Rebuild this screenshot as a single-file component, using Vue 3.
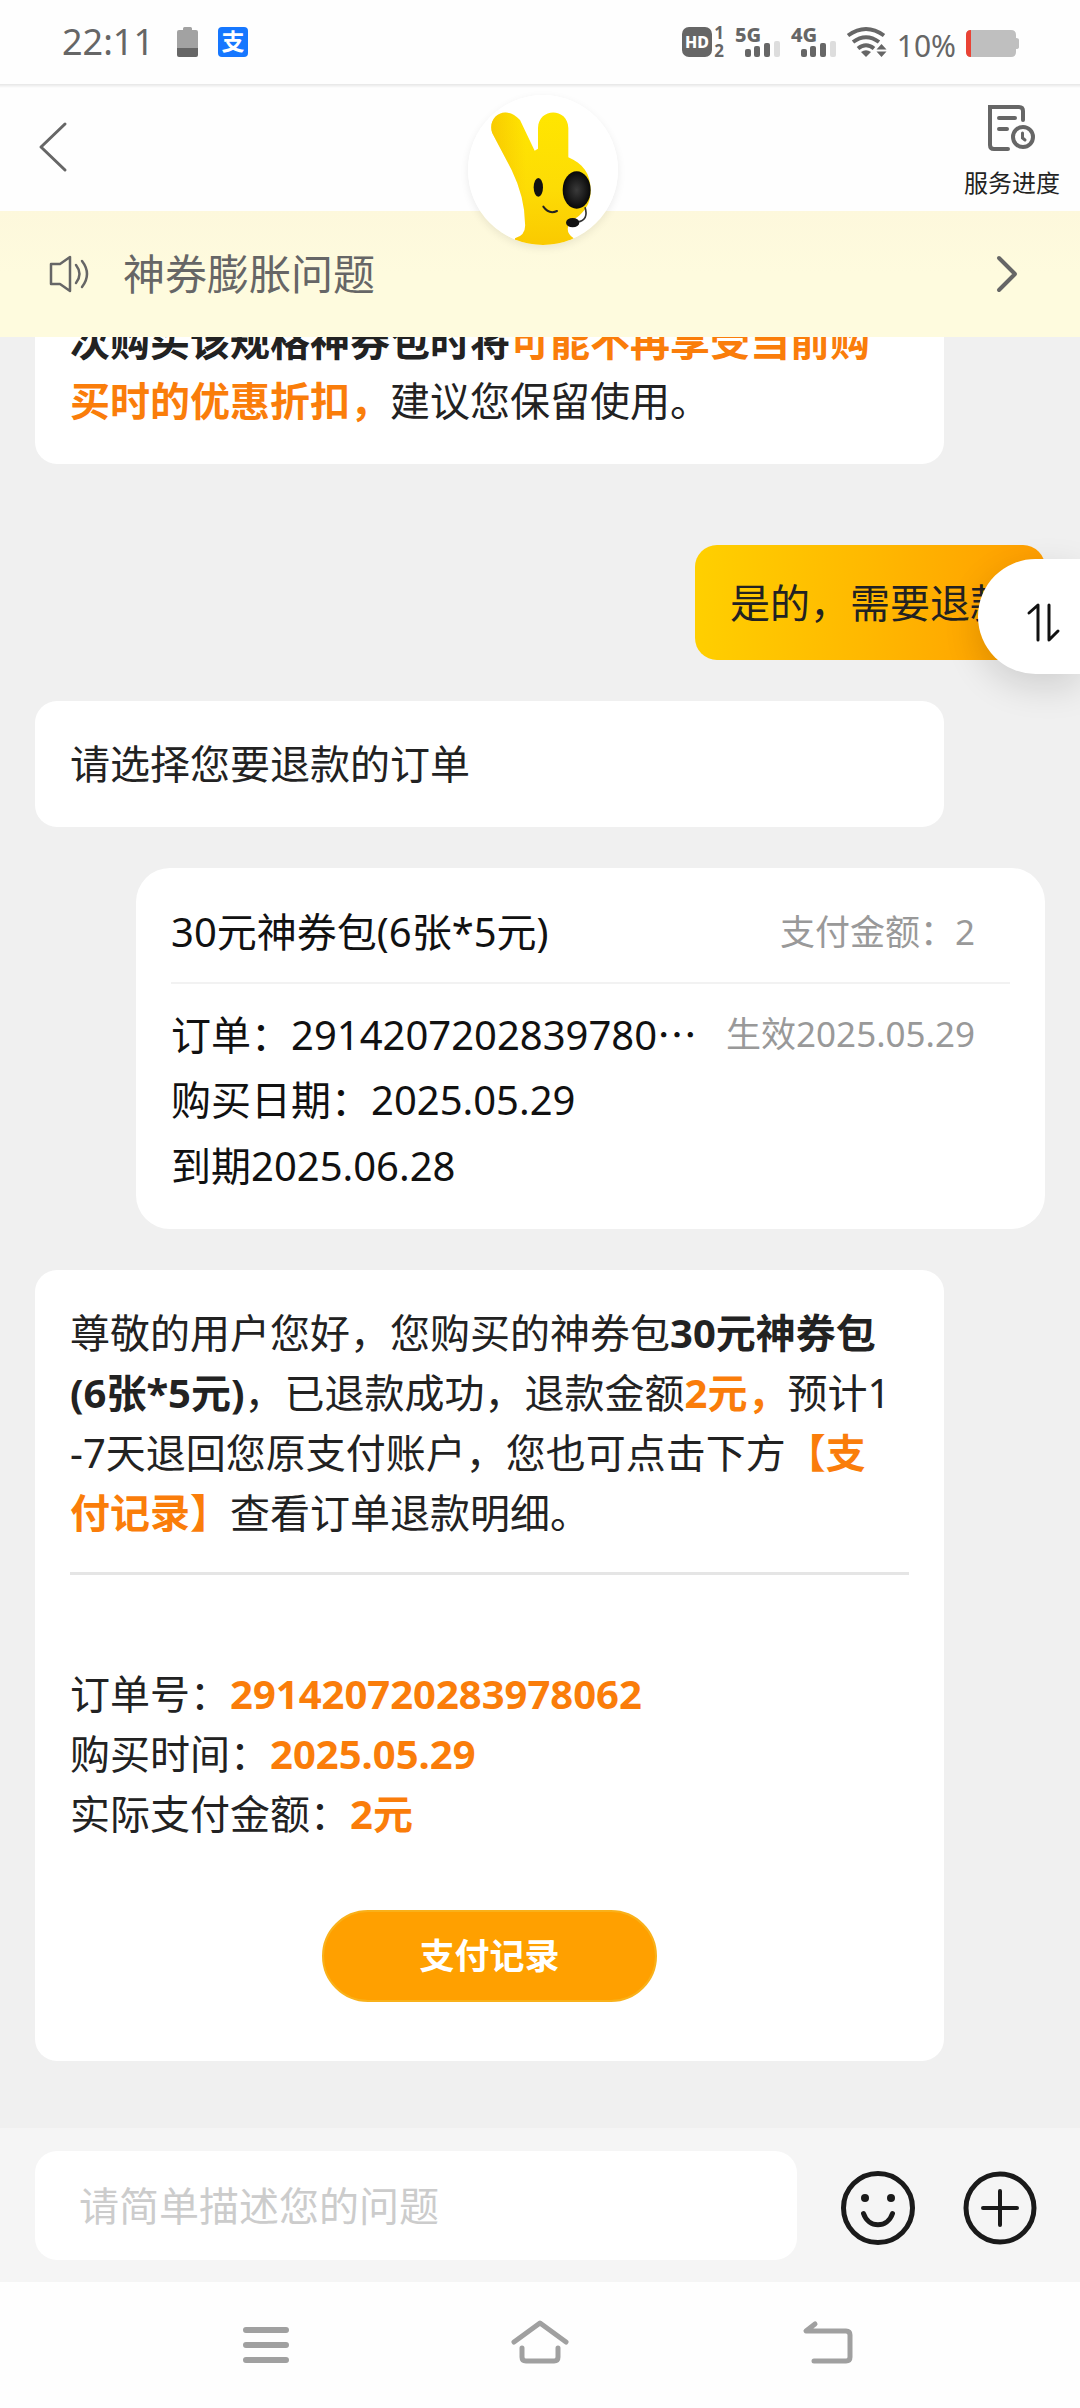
<script setup>
import { ref } from 'vue'

const draft = ref('')

const orderDetails = [
  { label: '订单号：', value: '291420720283978062' },
  { label: '购买时间：', value: '2025.05.29' },
  { label: '实际支付金额：', value: '2元' },
]

const networks = ['5G', '4G']
</script>

<template>
  <div class="page" lang="zh-CN">
    <div class="status">
      <div class="status-side">
        <span class="time">22:11</span>
        <svg class="low-battery" width="21" height="30" viewBox="0 0 21 30" aria-hidden="true">
          <path d="M6 3V1.500Q6 0 7.500 0h6Q15 0 15 1.500V3h4q2 0 2 2v16H0V5q0-2 2-2z" fill="#a2a2a2" />
          <path d="M0 21h21v7q0 2-2 2H2q-2 0-2-2z" fill="#666" />
        </svg>
        <span class="alipay">支</span>
      </div>
      <div class="status-side right">
        <svg width="43" height="30" viewBox="0 0 43 30" aria-hidden="true">
          <rect width="30" height="30" rx="7" fill="#666" />
          <text x="15" y="21" text-anchor="middle" font-size="16" font-weight="800" fill="#fff">HD</text>
          <text x="37" y="12" text-anchor="middle" font-size="17" font-weight="700" fill="#666">1</text>
          <text x="37" y="30" text-anchor="middle" font-size="17" font-weight="700" fill="#666">2</text>
        </svg>
        <svg v-for="name in networks" :key="name" width="46" height="30" viewBox="0 0 46 30" aria-hidden="true">
          <text x="0" y="15" font-size="20" font-weight="800" fill="#666">{{ name }}</text>
          <g fill="#666">
            <rect x="10" y="22" width="6" height="8" rx="2" />
            <rect x="19" y="19" width="6" height="11" rx="2" />
            <rect x="29" y="16" width="6" height="14" rx="2" />
          </g>
          <rect x="39" y="14" width="6" height="16" rx="2" fill="#ddd" />
        </svg>
        <svg width="40" height="30" viewBox="0 0 40 30" aria-hidden="true">
          <g fill="none" stroke="#666" stroke-width="4">
            <path d="M1 8.500Q19 -4.500 37 8.500" />
            <path d="M6 15Q19 5.500 32 15" />
            <path d="M11 21.500Q19 15 27 21.500" />
          </g>
          <path d="M19 30l-5-5q5-3.500 10 0z" fill="#666" />
          <path d="M34.500 17l5 5.500h-10zM34.500 30l5-5.500h-10z" fill="#666" />
        </svg>
        <span class="percent">10%</span>
        <svg width="54" height="27" viewBox="0 0 54 27" aria-hidden="true">
          <path d="M6 0h39q5 0 5 5v3q3 0 3 2v7q0 2-3 2v3q0 5-5 5H6q-6 0-6-5V5q0-5 6-5z" fill="#bfbfbf" />
          <path d="M5 0v27Q0 27 0 22V5Q0 0 5 0z" fill="#ea4335" />
        </svg>
      </div>
    </div>

    <header class="header">
      <button class="icon-button back" aria-label="返回">
        <svg width="28" height="50" viewBox="0 0 28 50"><path d="M26 2L2 25l24 23" fill="none" stroke="#666" stroke-width="3" stroke-linecap="round" stroke-linejoin="round" /></svg>
      </button>
      <div class="avatar">
        <svg width="150" height="150" viewBox="87 15 450 450" role="img" aria-label="客服">
          <defs>
            <linearGradient id="skin" x1="0" y1="0" x2="0" y2="1">
              <stop offset="0" stop-color="#ffe600" />
              <stop offset="0.550" stop-color="#fddc05" />
              <stop offset="1" stop-color="#fac800" />
            </linearGradient>
            <linearGradient id="shade" x1="0" y1="0" x2="1" y2="0">
              <stop offset="0" stop-color="#f2b200" stop-opacity="0.500" />
              <stop offset="0.350" stop-color="#f2b200" stop-opacity="0" />
            </linearGradient>
            <radialGradient id="muff"><stop offset="0" stop-color="#3a3a3a" /><stop offset="1" stop-color="#080808" /></radialGradient>
            <clipPath id="face"><circle cx="312" cy="240" r="225" /></clipPath>
            <path id="body" d="M160 130C142 82 198 40 243 90L287 182L297 176V114C299 52 386 52 388 114V202C430 220 455 250 455 300C455 355 425 375 392 398Q376 425 404 445L400 480H225L228 445Q262 435 258 400Q257 320 218 240Z" />
          </defs>
          <circle cx="312" cy="240" r="225" fill="#fff" />
          <g clip-path="url(#face)">
            <use href="#body" fill="url(#skin)" />
            <use href="#body" fill="url(#shade)" />
          </g>
          <ellipse cx="298" cy="292" rx="14" ry="28" fill="#111" />
          <ellipse cx="413" cy="300" rx="42" ry="56" fill="url(#muff)" />
          <path d="M313 350Q330 374 354 363" fill="none" stroke="#222" stroke-width="6" stroke-linecap="round" />
          <path d="M438 352Q450 390 416 396" fill="none" stroke="#333" stroke-width="5" />
          <ellipse cx="401" cy="398" rx="20" ry="14" fill="#111" />
        </svg>
      </div>
      <button class="progress">
        <svg width="48" height="46" viewBox="0 0 48 46" fill="none" stroke="#666" stroke-width="4" stroke-linecap="round">
          <path d="M35 15V6q0-4-4-4H2v38q0 4 4 4h14" />
          <path d="M11 13h16M11 24h8" />
          <circle cx="35" cy="32" r="10" />
          <path d="M34.500 28v5l2.500 2" stroke-width="3" />
        </svg>
        <span>服务进度</span>
      </button>
    </header>

    <a class="notice" href="#">
      <svg width="40" height="38" viewBox="0 0 40 38" fill="none" stroke="#666" stroke-width="2.500" stroke-linejoin="round" stroke-linecap="round">
        <path d="M2 9h9L21 2v34l-10-7H2z" />
        <path d="M27 10q7 9 0 18M33 6q10 13 0 26" />
      </svg>
      <span>神券膨胀问题</span>
      <svg width="22" height="38" viewBox="0 0 22 38" fill="none" stroke="#666" stroke-width="4" stroke-linecap="round" stroke-linejoin="round"><path d="M3 3l16 16L3 35" /></svg>
    </a>

    <main class="chat">
      <section class="message">
        <p><b>次购买该规格神券包时将</b><b class="accent">可能不再享受当前购<br>买时的优惠折扣，</b>建议您保留使用。</p>
      </section>

      <p class="reply">是的，需要退款</p>

      <section class="message">
        <p>请选择您要退款的订单</p>
      </section>

      <section class="order">
        <div class="order-head">
          <span>30元神券包(6张*5元)</span>
          <span class="muted">支付金额：2</span>
        </div>
        <div class="order-row">
          <span>订单：2914207202839780<span class="dots">…</span></span>
          <span class="muted">生效2025.05.29</span>
        </div>
        <div class="order-row">购买日期：2025.05.29</div>
        <div class="order-row">到期2025.06.28</div>
      </section>

      <section class="message">
        <p>尊敬的用户您好，您购买的神券包<b>30元神券包<br>(6张*5元)</b>，已退款成功，退款金额<b class="accent">2元，</b>预计1<br>-7天退回您原支付账户，您也可点击下方<b class="accent">【支<br>付记录】</b>查看订单退款明细。</p>
        <hr>
        <p v-for="item in orderDetails" :key="item.label">{{ item.label }}<b class="accent">{{ item.value }}</b></p>
        <button class="record">支付记录</button>
      </section>
    </main>

    <button class="switcher" aria-label="切换">
      <svg width="34" height="40" viewBox="0 0 34 40" fill="none" stroke="#111" stroke-width="3" stroke-linecap="round" stroke-linejoin="round">
        <path d="M3 11l9-8v35M23 3v35l9-9" />
      </svg>
    </button>

    <form class="composer" @submit.prevent>
      <input v-model="draft" type="text" placeholder="请简单描述您的问题" aria-label="请简单描述您的问题">
      <button type="button" class="icon-button" aria-label="表情">
        <svg width="74" height="74" viewBox="0 0 74 74" fill="none" stroke="#1a1a1a" stroke-width="5" stroke-linecap="round">
          <circle cx="37" cy="37" r="34.500" />
          <path d="M22.500 42.500c5 15 24 15 29 0" />
          <circle cx="24" cy="27" r="4" fill="#1a1a1a" stroke="none" />
          <circle cx="50" cy="27" r="4" fill="#1a1a1a" stroke="none" />
        </svg>
      </button>
      <button type="button" class="icon-button" aria-label="更多">
        <svg width="74" height="74" viewBox="0 0 74 74" fill="none" stroke="#1a1a1a" stroke-width="5" stroke-linecap="round">
          <circle cx="37" cy="37" r="34" />
          <path d="M20 37h34M37 20v34" stroke-width="4" />
        </svg>
      </button>
    </form>

    <nav class="system-nav">
      <button aria-label="最近任务">
        <svg width="60" height="48" viewBox="0 0 60 48" stroke="#a0a0a0" stroke-width="6" stroke-linecap="round"><path d="M10 9h40M10 24h40M10 39h40" /></svg>
      </button>
      <button aria-label="主屏幕">
        <svg width="60" height="48" viewBox="0 0 60 48" fill="none" stroke="#a0a0a0" stroke-width="5" stroke-linecap="round" stroke-linejoin="round">
          <path d="M4 21L30 2l26 19" />
          <path d="M12 27v9q0 4 4 4h28q4 0 4-4v-9" />
        </svg>
      </button>
      <button aria-label="返回上一级">
        <svg width="90" height="48" viewBox="-30 0 90 48" fill="none" stroke="#a0a0a0" stroke-width="5" stroke-linecap="round" stroke-linejoin="round">
          <path d="M16 3l-9 7h40q4 0 4 4v22q0 4-4 4H15" />
        </svg>
      </button>
    </nav>
  </div>
</template>

<style>
body {
  margin: 0;
}
</style>

<style scoped>
.page {
  position: relative;
  display: flex;
  flex-direction: column;
  height: 100vh;
  overflow: hidden;
  background: #f0f0f0;
  color: #222;
  font-family: "Noto Sans", "Noto Sans CJK SC", sans-serif;
  font-size: 40px;
  line-height: 60px;
}

p {
  margin: 0;
}

svg {
  display: block;
  flex: none;
  overflow: visible;
}

button,
input {
  margin: 0;
  padding: 0;
  border: 0;
  background: none;
  color: inherit;
  font: inherit;
}

.icon-button {
  flex: none;
}

.status {
  display: flex;
  justify-content: space-between;
  height: 57px;
  padding: 0 60px 27px 62px;
  background: #fefefe;
  color: #666;
}

.status-side {
  display: flex;
  align-items: flex-end;
}

.status-side.right {
  gap: 10px;
}

.time {
  margin-right: 23px;
  font-size: 36px;
  line-height: 36px;
  height: 33px;
}

.alipay {
  width: 30px;
  height: 30px;
  margin-left: 20px;
  border-radius: 4px;
  background: #1677ff;
  color: #fff;
  font-size: 23px;
  font-weight: 700;
  line-height: 29px;
  text-align: center;
}

.percent {
  font-size: 30px;
  line-height: 30px;
  height: 26px;
}

.header {
  z-index: 2;
  display: grid;
  grid-template-columns: 1fr 150px 1fr;
  align-items: start;
  justify-items: start;
  height: 127px;
  padding: 0 20px 0 39px;
  background: linear-gradient(#e6e6e6, #fefefe 4px);
}

.back {
  margin-top: 38px;
}

.avatar {
  margin: 11px 0 0 -7px;
  border-radius: 50%;
  box-shadow: 0 3px 8px rgba(0, 0, 0, 0.080);
}

.progress {
  display: flex;
  flex-direction: column;
  align-items: center;
  justify-self: end;
  gap: 14px;
  margin-top: 21px;
  font-size: 24px;
  line-height: 36px;
}

.notice {
  z-index: 1;
  display: flex;
  align-items: center;
  gap: 34px;
  height: 126px;
  padding: 0 62px 0 49px;
  background: linear-gradient(#fdf8dc, #fefbde 50%);
  color: #666;
  font-size: 42px;
  text-decoration: none;
}

.notice span {
  flex: 1;
}

.chat {
  display: flex;
  flex: 1;
  flex-direction: column;
  justify-content: flex-end;
  gap: 41px;
  min-height: 0;
  padding: 0 35px 67px;
  overflow: hidden;
}

.chat > * {
  flex: none;
}

.message {
  margin-right: 101px;
  padding: 33px 35px;
  border-radius: 22px;
  background: #fff;
}

.accent {
  color: #fa7d0a;
}

.reply {
  align-self: flex-end;
  margin-top: 40px;
  padding: 28px 35px 27px;
  border-radius: 22px;
  background: linear-gradient(95deg, #ffd000, #ffb800 50%, #ff9c00);
}

.order {
  margin-left: 101px;
  padding: 0 35px 30px;
  border-radius: 34px;
  background: #fff;
  color: #111;
}

.order-head,
.order-row {
  display: flex;
  align-items: center;
  justify-content: space-between;
  height: 66px;
  padding-right: 35px;
}

.order-head {
  height: 100px;
  padding-top: 14px;
  margin-bottom: 17px;
  border-bottom: 2px solid #f2f2f2;
}

.muted {
  color: #999;
  font-size: 35px;
}

.dots {
  font-family: "Noto Sans CJK SC", sans-serif;
}

hr {
  height: 3px;
  margin: 29px 0 89px;
  border: 0;
  background: #e5e5e5;
}

.record {
  display: block;
  width: 40%;
  height: 92px;
  margin: 66px auto 26px;
  border: 2px solid #f9b11a;
  border-radius: 46px;
  background: #ffa000;
  color: #fff;
  font-size: 35px;
  font-weight: 700;
}

.switcher {
  position: absolute;
  top: 559px;
  right: 0;
  z-index: 3;
  display: flex;
  align-items: center;
  width: 102px;
  height: 115px;
  padding: 10px 0 0 48px;
  box-sizing: border-box;
  border-radius: 58px 0 0 58px;
  background: #fff;
  box-shadow: 0 12px 36px rgba(0, 0, 0, 0.140);
}

.composer {
  display: flex;
  align-items: center;
  gap: 48px;
  height: 154px;
  padding: 0 43px 0 35px;
  background: #f5f5f5;
}

.composer input {
  flex: 1;
  min-width: 0;
  height: 109px;
  padding: 0 44px;
  box-sizing: border-box;
  border-radius: 22px;
  background: #fff;
  margin-right: -4px;
}

.composer input::placeholder {
  color: #ccc;
  opacity: 1;
}

.composer .icon-button {
  padding-top: 6px;
}

.system-nav {
  display: flex;
  align-items: center;
  height: 126px;
  padding: 0 12%;
  background: #fefefe;
}

.system-nav button {
  display: flex;
  flex: 1;
  justify-content: center;
}
</style>
